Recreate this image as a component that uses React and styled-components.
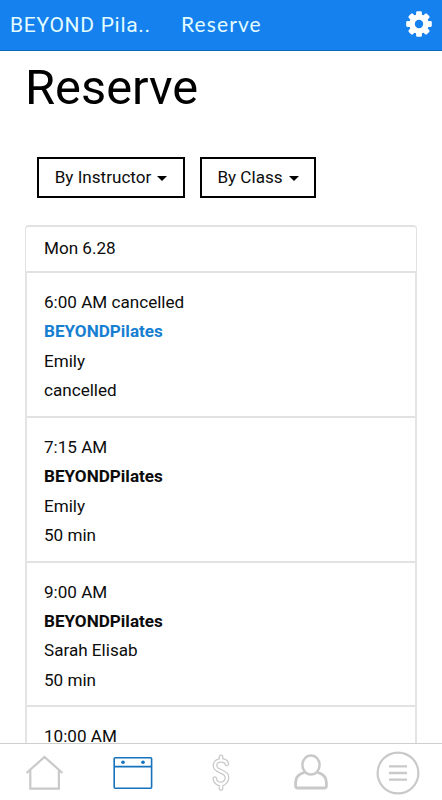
import styled, { createGlobalStyle } from "styled-components";

const classes = [
    { time: "6:00 AM cancelled", name: "BEYONDPilates", coach: "Emily", info: "cancelled", active: true },
    { time: "7:15 AM", name: "BEYONDPilates", coach: "Emily", info: "50 min" },
    { time: "9:00 AM", name: "BEYONDPilates", coach: "Sarah Elisab", info: "50 min" },
    { time: "10:00 AM" },
];

const dollarPath = "M15.8 9.8C15.2 7.2 12.6 6.4 10 6.4C6.9 6.4 4 8.2 4 11.4C4 18.6 16 16.2 16 23.4C16 26.6 13.4 30 10 30C6.6 30 4 27.6 3.8 24.6M10 3V6.4M10 30V34.6";

const App =()=>{
    return(
        <Screen>
            <GlobalStyle/>

            <Header>
                <Studio>BEYOND Pila..</Studio>
                <PageName>Reserve</PageName>
                <Gear viewBox="0 0 26 26">
                    {[0, 45, 90, 135].map((a) => (
                        <rect key={a} x="10.1" y="0.2" width="5.8" height="25.6" rx="1.3" transform={`rotate(${a} 13 13)`}/>
                    ))}
                    <circle cx="13" cy="13" r="9.8"/>
                    <circle cx="13" cy="13" r="4.2" fill="#1581ee"/>
                </Gear>
            </Header>

            <Content>
                <Title>Reserve</Title>

                <Filters>
                    <Filter $width="148px">By Instructor<Caret/></Filter>
                    <Filter $width="116px">By Class<Caret/></Filter>
                </Filters>

                <DayHead>Mon 6.28</DayHead>
                <List>
                    {classes.map((item) => (
                        <Row key={item.time}>
                            <Line>{item.time}</Line>
                            {item.name && <ClassName $active={item.active}>{item.name}</ClassName>}
                            {item.coach && <Line>{item.coach}</Line>}
                            {item.info && <Line>{item.info}</Line>}
                        </Row>
                    ))}
                </List>
            </Content>

            <TabBar>
                <Tab>
                    <Icon width="40" height="36" viewBox="0 0 40 36">
                        <path d="M1.5 18L19.5 2L37.5 18M5.3 15V33.6H33.9V15" strokeWidth="2.2"/>
                    </Icon>
                </Tab>
                <Tab $active>
                    <Icon width="40" height="34" viewBox="0 0 40 34">
                        <rect x="1.2" y="1.7" width="37.4" height="30.6" rx="1" strokeWidth="1.6"/>
                        <path d="M1 10.6H39" strokeWidth="1.6"/>
                        <circle cx="10" cy="6.2" r="1.8" fill="currentColor" stroke="none"/>
                        <circle cx="30" cy="6.2" r="1.8" fill="currentColor" stroke="none"/>
                    </Icon>
                </Tab>
                <Tab>
                    <Icon width="20" height="38" viewBox="0 0 20 38">
                        <path d={dollarPath} strokeWidth="4.8" strokeLinecap="round"/>
                        <path d={dollarPath} stroke="#fff" strokeWidth="2.3" strokeLinecap="round"/>
                    </Icon>
                </Tab>
                <Tab>
                    <Icon width="36" height="38" viewBox="0 0 36 38">
                        <ellipse cx="18" cy="12" rx="8.6" ry="9.6" strokeWidth="2.5"/>
                        <path d="M11.6 19.4C6 20.8 2.6 24.4 2.6 29.4V33Q2.6 35 4.6 35H31.4Q33.4 35 33.4 33V29.4C33.4 24.4 30 20.8 24.4 19.4" strokeWidth="2.8"/>
                    </Icon>
                </Tab>
                <Tab>
                    <Icon width="44" height="44" viewBox="0 0 44 44">
                        <circle cx="22" cy="22" r="20.4" strokeWidth="2.2"/>
                        <path d="M13 15.3H31M13 22H31M13 28.7H31" strokeWidth="2.3"/>
                    </Icon>
                </Tab>
            </TabBar>
        </Screen>
    );
};
export default App;

const GlobalStyle = createGlobalStyle`

    body {
        margin: 0;
        background-color: white;
    }

    * {
        box-sizing: border-box;
    }

`

const Screen = styled.div`

    width: 442px;
    height: 800px;
    display: flex;
    flex-direction: column;
    overflow: hidden;
    font-family: Roboto, sans-serif;
    color: #0c0c0c;
    background-color: white;

`

const Header = styled.header`

    height: 51px;
    flex-shrink: 0;
    display: flex;
    align-items: center;
    padding: 0 10px 2px 10px;
    background-color: #1581ee;
    border-bottom: 1px solid #0b69b8;
    color: #e2fbff;

`

const Studio = styled.div`

    width: 171px;
    padding-top: 2px;
    font-size: 21px;
    letter-spacing: 0.7px;
    white-space: nowrap;

`

const PageName = styled.div`

    padding-bottom: 2px;
    font-family: Lato, sans-serif;
    font-size: 21px;
    letter-spacing: 1.1px;

`

const Gear = styled.svg`

    width: 26px;
    height: 26px;
    margin-left: auto;
    fill: white;

`

const Content = styled.main`

    flex: 1;
    min-height: 0;
    overflow: hidden;
    padding: 0 25px;

`

const Title = styled.h1`

    margin: 8px 0 0 0;
    font-size: 48.8px;
    font-weight: 400;
    line-height: 58px;
    color: black;

`

const Filters = styled.div`

    display: flex;
    gap: 15px;
    margin: 40px 0 27px 12px;

`

const Filter = styled.button`

    width: ${(p) => p.$width};
    height: 41px;
    padding: 0 0 1px 0;
    display: flex;
    justify-content: center;
    align-items: center;
    gap: 6px;
    border: 2px solid black;
    background-color: white;
    color: #0c0c0c;
    font-family: Roboto, sans-serif;
    font-size: 17.1px;
    white-space: nowrap;

`

const Caret = styled.span`

    margin-top: 3px;
    border-top: 5px solid black;
    border-left: 5px solid transparent;
    border-right: 5px solid transparent;

`

const DayHead = styled.div`

    height: 46px;
    padding-left: 18px;
    border: 1px solid #e2e2e2;
    border-top-width: 2px;
    border-bottom: none;
    border-radius: 4px 4px 0 0;
    font-size: 17.1px;
    line-height: 43px;

`

const List = styled.div`

    border: solid #e4e4e4;
    border-width: 0 2px;

`

const Row = styled.div`

    height: 144.8px;
    padding: 15px 0 0 17px;
    border-top: 2px solid #e2e2e2;

`

const Line = styled.div`

    font-size: 17.1px;
    line-height: 29.4px;

`

const ClassName = styled(Line)`

    font-weight: 700;
    color: ${(p) => (p.$active ? "#177fd2" : "#0c0c0c")};

`

const TabBar = styled.nav`

    height: 57px;
    flex-shrink: 0;
    display: grid;
    grid-template-columns: repeat(5, 1fr);
    padding-top: 1px;
    border-top: 1px solid #cfcfcf;
    background-color: white;

`

const Tab = styled.div`

    display: flex;
    justify-content: center;
    align-items: center;
    color: ${(p) => (p.$active ? "#1573bd" : "#c9c9c9")};

    &:first-child {
        padding-left: 2px;
    }

    &:nth-child(4) {
        padding-left: 3px;
        padding-bottom: 2px;
    }

`

const Icon = styled.svg`

    display: block;
    fill: none;
    stroke: currentColor;

`
